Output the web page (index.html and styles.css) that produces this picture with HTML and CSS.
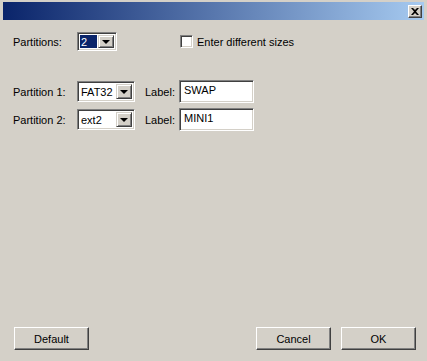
FILE: index.html
```html
<!DOCTYPE html>
<html lang="en">

<head>
    <meta charset="UTF-8" />
    <title>Partitions</title>
    <link rel="stylesheet" href="styles.css">
</head>

<body>
    <div class="dialog">
        <div class="titlebar">
            <span class="close">
                <svg width="8" height="7" viewBox="0 0 8 7">
                    <path d="M0 0h2l2 2 2-2h2L5 3.5 8 7H6L4 5 2 7H0l3-3.5z" fill="#000" />
                </svg>
            </span>
        </div>

        <div class="content">
            <div class="row top">
                <span class="caption">Partitions:</span>
                <div class="combo count">
                    <span class="value selected">2</span>
                    <span class="arrow"></span>
                </div>
                <label class="check"><span class="box"></span>Enter different sizes</label>
            </div>

            <div class="parts">
                <div class="row part">
                    <span class="caption">Partition 1:</span>
                    <div class="combo fs">
                        <span class="value">FAT32</span>
                        <span class="arrow"></span>
                    </div>
                    <span class="caption small">Label:</span>
                    <div class="field">SWAP</div>
                </div>
                <div class="row part">
                    <span class="caption">Partition 2:</span>
                    <div class="combo fs">
                        <span class="value">ext2</span>
                        <span class="arrow"></span>
                    </div>
                    <span class="caption small">Label:</span>
                    <div class="field">MINI1</div>
                </div>
            </div>

            <div class="footer">
                <button class="btn">Default</button>
                <div class="right">
                    <button class="btn">Cancel</button>
                    <button class="btn">OK</button>
                </div>
            </div>
        </div>
    </div>
</body>

</html>
```

FILE: styles.css
```css
* {
    box-sizing: border-box;
}

body {
    margin: 0;
    font-family: "Liberation Sans", Arial, sans-serif;
    font-size: 11px;
    color: #000;
}

.dialog {
    width: 427px;
    height: 361px;
    background-color: #d4d0c8;
    padding: 2px 3px 0;
    display: flex;
    flex-direction: column;
}

.titlebar {
    height: 18px;
    background: linear-gradient(to right, #0a246a, #a6caf0);
    display: flex;
    justify-content: flex-end;
    align-items: center;
    padding-right: 2px;
}

.close {
    width: 14px;
    height: 13px;
    background-color: #d4d0c8;
    border: 1px solid;
    border-color: #fff #404040 #404040 #fff;
    box-shadow: inset -1px -1px #808080;
    display: flex;
    justify-content: center;
    align-items: center;
}

.content {
    flex: 1;
    display: flex;
    flex-direction: column;
    padding: 12px 8px 11px 10px;
}

.row {
    display: flex;
    align-items: center;
}

.caption {
    width: 64px;
}

.caption.small {
    width: 34px;
    margin-left: 10px;
}

/* sunken boxes */
.combo,
.field,
.box {
    background-color: #fff;
    border: 1px solid;
    border-color: #808080 #fff #fff #808080;
    box-shadow: inset 1px 1px #404040, inset -1px -1px #d4d0c8;
}

.combo {
    display: flex;
    align-items: stretch;
    padding: 2px;
    height: 19px;
}

.combo.count {
    width: 40px;
}

.combo.fs {
    width: 58px;
    height: 21px;
}

.combo .value {
    flex: 1;
    padding-left: 1px;
    display: flex;
    align-items: center;
}

.combo .value.selected {
    background-color: #0a246a;
    color: #fff;
    margin-right: 1px;
}

.arrow {
    width: 16px;
    background-color: #d4d0c8;
    border: 1px solid;
    border-color: #d4d0c8 #404040 #404040 #d4d0c8;
    box-shadow: inset 1px 1px #fff, inset -1px -1px #808080;
    display: flex;
    justify-content: center;
    align-items: center;
}

.arrow::after {
    content: "";
    border-left: 4px solid transparent;
    border-right: 4px solid transparent;
    border-top: 4px solid #000;
    margin-top: 1px;
}

.check {
    display: flex;
    align-items: center;
    margin-left: 63px;
}

.box {
    width: 13px;
    height: 13px;
    margin-right: 4px;
}

.parts {
    margin-top: 29px;
    display: flex;
    flex-direction: column;
    gap: 5px;
}

.part {
    height: 23px;
}

.field {
    width: 75px;
    height: 23px;
    padding: 3px 4px;
}

.footer {
    margin-top: auto;
    display: flex;
    justify-content: space-between;
    padding-left: 1px;
}

.footer .right {
    display: flex;
    gap: 10px;
}

.btn {
    width: 75px;
    height: 23px;
    font: inherit;
    color: #000;
    background-color: #d4d0c8;
    border: 1px solid;
    border-color: #fff #404040 #404040 #fff;
    box-shadow: inset -1px -1px #808080;
    padding: 0;
}
```
